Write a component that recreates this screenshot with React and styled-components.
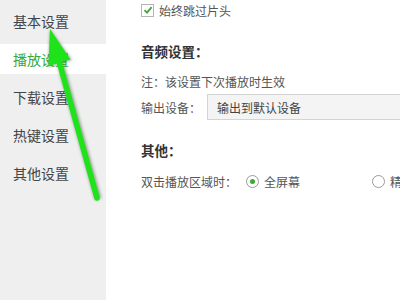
import React from 'react'
import styled, { createGlobalStyle } from 'styled-components'

const GlobalStyle = createGlobalStyle`
  html, body {
    margin: 0;
    padding: 0;
    background: #fff;
  }
  body {
    font-family: "Noto Sans CJK SC", "Noto Sans", sans-serif;
    color: #333;
  }
`

const Window = styled.div`
  position: relative;
  width: 400px;
  height: 300px;
  display: flex;
  overflow: hidden;
  background: #fff;
`

const Sidebar = styled.div`
  width: 106px;
  flex-shrink: 0;
  background: #efefef;
  display: flex;
  flex-direction: column;
  gap: 8px;
  padding-top: 6px;
  box-sizing: border-box;
`

const NavItem = styled.div`
  height: 30px;
  display: flex;
  align-items: center;
  padding-left: 13px;
  font-size: 14px;
  color: ${({ active }) => (active ? '#3aa935' : '#444')};
  background: ${({ active }) => (active ? '#fff' : 'transparent')};
`

const Main = styled.div`
  flex: 1;
  min-width: 0;
  overflow: hidden;
  padding-left: 35px;
  display: flex;
  flex-direction: column;
  font-size: 12px;
  color: #555;
  white-space: nowrap;
`

const Row = styled.div`
  display: flex;
  align-items: center;
  height: ${({ h }) => h || 20}px;
  margin-top: ${({ mt }) => mt || 0}px;
`

const Heading = styled(Row)`
  font-size: 13.5px;
  font-weight: bold;
  color: #333;
`

const CheckBox = styled.span`
  width: 11px;
  height: 11px;
  border: 1px solid #b5b5b5;
  background: #fff;
  display: inline-flex;
  align-items: center;
  justify-content: center;
  margin-right: 5px;
`

const Label = styled.span`
  width: ${({ w }) => w || 66}px;
  flex-shrink: 0;
`

const Select = styled.div`
  flex: 1;
  height: 24px;
  border: 1px solid #d4d4d4;
  border-right: none;
  background: #f4f4f4;
  display: flex;
  align-items: center;
  padding-left: 9px;
  color: #444;
`

const Radio = styled.span`
  width: 11px;
  height: 11px;
  border-radius: 50%;
  border: 1px solid #9a9a9a;
  background: #fff;
  display: inline-flex;
  align-items: center;
  justify-content: center;
  margin-right: 5px;
  flex-shrink: 0;
  &::after {
    content: '';
    width: 5px;
    height: 5px;
    border-radius: 50%;
    background: ${({ checked }) => (checked ? '#3aa935' : 'transparent')};
  }
`

const RadioOption = styled.span`
  display: inline-flex;
  align-items: center;
  flex-shrink: 0;
  width: ${({ w }) => w || 'auto'};
`

const ArrowLayer = styled.svg`
  position: absolute;
  left: 0;
  top: 0;
  pointer-events: none;
`

const navItems = ['基本设置', '播放设置', '下载设置', '热键设置', '其他设置']

export default function App() {
  return (
    <>
      <GlobalStyle />
      <Window>
        <Sidebar>
          {navItems.map((t, i) => (
            <NavItem key={t} active={i === 1}>
              {t}
            </NavItem>
          ))}
        </Sidebar>
        <Main>
          <Row h={20}>
            <CheckBox>
              <svg width="10" height="10" viewBox="0 0 10 10">
                <path d="M1.5 5.2 L4 7.6 L8.6 2.2" stroke="#3aa935" strokeWidth="1.8" fill="none" />
              </svg>
            </CheckBox>
            始终跳过片头
          </Row>
          <Heading mt={21}>音频设置：</Heading>
          <Row mt={11} h={18}>注：该设置下次播放时生效</Row>
          <Row mt={4} h={26}>
            <Label>输出设备：</Label>
            <Select>输出到默认设备</Select>
          </Row>
          <Heading mt={20}>其他：</Heading>
          <Row mt={11}>
            <Label w={105}>双击播放区域时：</Label>
            <RadioOption w="126px">
              <Radio checked />
              全屏幕
            </RadioOption>
            <RadioOption>
              <Radio />
              精简模式
            </RadioOption>
          </Row>
        </Main>
        <ArrowLayer width="400" height="300" viewBox="0 0 400 300">
          <defs>
            <filter id="blur" x="-50%" y="-50%" width="200%" height="200%">
              <feGaussianBlur stdDeviation="1.8" />
            </filter>
          </defs>
          <g filter="url(#blur)" opacity="0.45">
            <line x1="98" y1="199" x2="60" y2="62" stroke="#2a4a20" strokeWidth="7" />
            <polygon points="50,29 48,67 72,60" fill="#2a4a20" />
          </g>
          <line x1="97" y1="198" x2="59" y2="61" stroke="#1ee31a" strokeWidth="5.5" strokeLinecap="round" />
          <polygon points="50,29 48.5,66 70.5,59.5" fill="#1ee31a" />
        </ArrowLayer>
      </Window>
    </>
  )
}
